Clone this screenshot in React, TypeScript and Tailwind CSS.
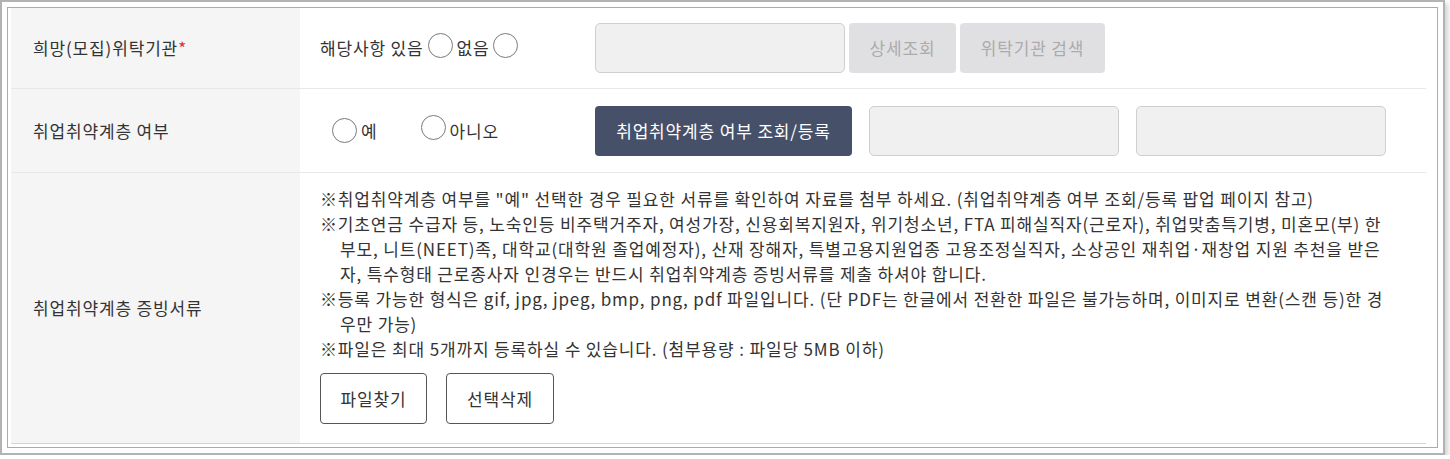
const notes = [
  '취업취약계층 여부를 "예" 선택한 경우 필요한 서류를 확인하여 자료를 첨부 하세요. (취업취약계층 여부 조회/등록 팝업 페이지 참고)',
  "기초연금 수급자 등, 노숙인등 비주택거주자, 여성가장, 신용회복지원자, 위기청소년, FTA 피해실직자(근로자), 취업맞춤특기병, 미혼모(부) 한부모, 니트(NEET)족, 대학교(대학원 졸업예정자), 산재 장해자, 특별고용지원업종 고용조정실직자, 소상공인 재취업·재창업 지원 추천을 받은 자, 특수형태 근로종사자 인경우는 반드시 취업취약계층 증빙서류를 제출 하셔야 합니다.",
  "등록 가능한 형식은 gif, jpg, jpeg, bmp, png, pdf 파일입니다. (단 PDF는 한글에서 전환한 파일은 불가능하며, 이미지로 변환(스캔 등)한 경우만 가능)",
  "파일은 최대 5개까지 등록하실 수 있습니다. (첨부용량 : 파일당 5MB 이하)",
];

function Radio() {
  return <span className="inline-block h-[25px] w-[25px] shrink-0 rounded-full border border-[#7a7a7a] bg-white" />;
}

function Label({ children }: { children: React.ReactNode }) {
  return (
    <div className="flex w-[289px] shrink-0 items-center bg-[#f5f5f5] pl-[22px] text-[#333]">
      {children}
    </div>
  );
}

function Field() {
  return <div className="h-[50px] w-[250px] rounded-[5px] border border-[#cfcfcf] bg-[#f0f0f0]" />;
}

export default function App() {
  return (
    <div
      className="h-[455px] w-[1445px] border-2 border-[#b3b3b3] bg-white p-[5px] text-[17px] tracking-[0.85px] text-[#333] shadow-[3px_3px_5px_rgba(0,0,0,0.18)]"
      style={{ fontFamily: '"Noto Sans CJK KR", "Noto Sans", sans-serif' }}
    >
      <div className="h-full border border-[#ababab] pl-[3px] pr-[11px]">
        <div className="flex flex-col border-b border-[#d4d4d4]">
          {/* row 1 */}
          <div className="flex h-[81px] border-b border-[#e8e8e8]">
            <Label>
              희망(모집)위탁기관<span className="text-[#e0303a]">*</span>
            </Label>
            <div className="flex flex-1 items-center pl-[20px]">
              <div className="flex w-[275px] items-center">
                <span>해당사항 있음</span>
                <span className="ml-[4px]"><Radio /></span>
                <span className="ml-[4px]">없음</span>
                <span className="ml-[3px]"><Radio /></span>
              </div>
              <Field />
              <button className="ml-[4px] h-[50px] w-[107px] rounded-[4px] bg-[#e0e0e2] text-[#ababab]">상세조회</button>
              <button className="ml-[4px] h-[50px] w-[145px] rounded-[4px] bg-[#e0e0e2] text-[#ababab]">위탁기관 검색</button>
            </div>
          </div>
          {/* row 2 */}
          <div className="flex h-[84px] border-b border-[#e8e8e8]">
            <Label>취업취약계층 여부</Label>
            <div className="flex flex-1 items-center pl-[20px]">
              <div className="flex w-[275px] items-center pl-[12px]">
                <Radio />
                <span className="ml-[4px]">예</span>
                <span className="ml-[43px]"><Radio /></span>
                <span className="ml-[4px]">아니오</span>
              </div>
              <button className="h-[50px] w-[257px] rounded-[4px] bg-[#465069] text-white">취업취약계층 여부 조회/등록</button>
              <div className="ml-[17px]"><Field /></div>
              <div className="ml-[17px]"><Field /></div>
            </div>
          </div>
          {/* row 3 */}
          <div className="flex h-[270px]">
            <Label>취업취약계층 증빙서류</Label>
            <div className="flex flex-1 flex-col pl-[20px] pr-[34px] pt-[13px]">
              {notes.map((n) => (
                <p key={n} className="pl-[20px] -indent-[20px] leading-[25px]">
                  ※{n}
                </p>
              ))}
              <div className="mt-[12px] flex gap-[19px]">
                <button className="h-[51px] w-[107px] rounded-[4px] border border-[#555] bg-white">파일찾기</button>
                <button className="h-[51px] w-[108px] rounded-[4px] border border-[#555] bg-white">선택삭제</button>
              </div>
            </div>
          </div>
        </div>
      </div>
    </div>
  );
}
